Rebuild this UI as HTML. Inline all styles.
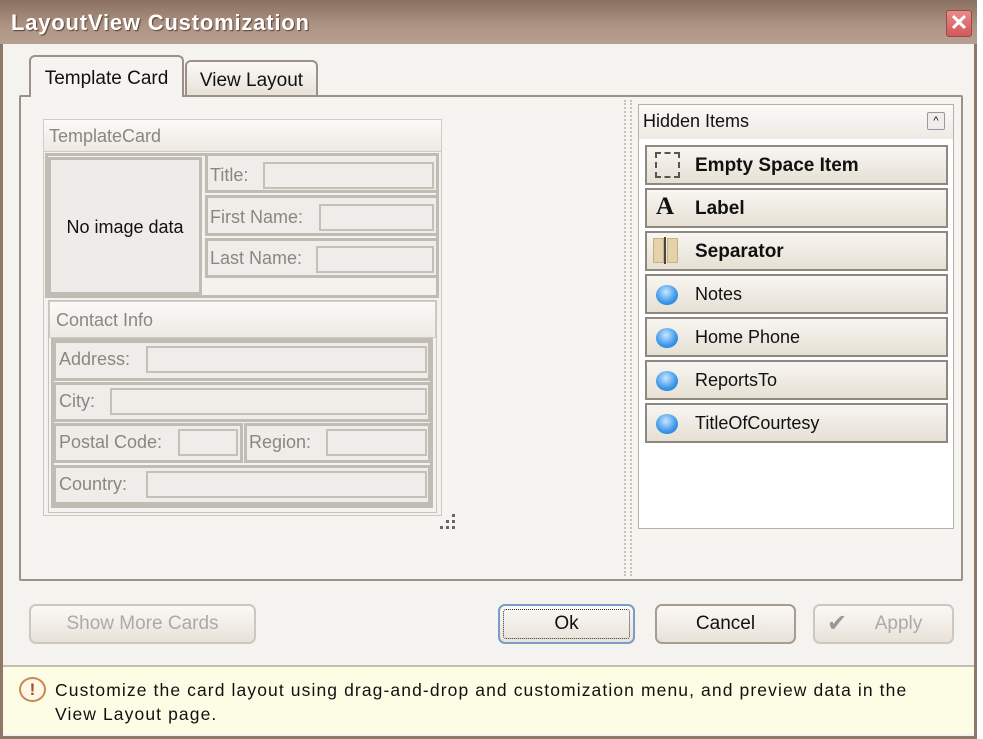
<!DOCTYPE html>
<html><head><style>
*{box-sizing:border-box;margin:0;padding:0}
body{width:983px;height:739px;background:#fff;position:relative;overflow:hidden;font-family:"Liberation Sans",sans-serif;font-size:18px;color:#111}
.a{position:absolute}
.win{left:0;top:0;width:977px;height:739px;background:#f5f3ef;border:3px solid #8e7868;border-top:0}
.title{left:0;top:0;width:977px;height:44px;background:linear-gradient(#8a7060,#ad9484 60%,#b8a090);color:#fff;font-weight:bold;font-size:22px;letter-spacing:0.8px;padding:10px 0 0 11px;text-shadow:1px 1px 1px #5a4030}
.close{left:946px;top:10px;width:26px;height:27px;background:linear-gradient(#ea8a8a,#d25858);border:1px solid #9a4a4a;border-radius:3px;color:#fff;font-weight:bold;font-size:22px;line-height:24px;text-align:center}
.panel{left:19px;top:95px;width:944px;height:486px;border:2px solid #9c9088;background:#f6f4f0;border-radius:2px}
.tab{border:2px solid #9c9088;border-bottom:0;border-radius:6px 6px 0 0;text-align:center}
.g{color:#8a8680}
.box{border:3px solid #c0bcb4;background:#efedea}
.inp{border:2px solid #c4c0b8;background:#efedea}
.hdr{background:linear-gradient(#fbfaf8,#edeae4);border:1px solid #d0ccc4}
.item{left:645px;width:303px;height:40px;border:2px solid #8f8880;background:linear-gradient(#f8f6f2,#e6e0d4);padding:8px 0 0 48px}
.ball{left:9px;top:9px;width:22px;height:20px;border-radius:50%;background:radial-gradient(circle at 45% 35%,#c8e6ff,#3a96e8 60%,#1a70c8)}
.btn{top:604px;height:40px;border:2px solid #a89c90;border-radius:7px;background:linear-gradient(#fbf9f6,#e8e2d8);text-align:center;line-height:36px;font-size:19px}
</style></head><body>
<div class="a win"></div>
<div class="a title">LayoutView Customization</div>
<div class="a close">✕</div>
<div class="a panel"></div>
<div class="a tab" style="left:29px;top:55px;width:155px;height:42px;background:#f6f4f0;padding-top:11px;font-size:19px">Template Card</div>
<div class="a tab" style="left:185px;top:60px;width:133px;height:35px;background:linear-gradient(#fbfaf7,#e8e2d8);padding-top:8px;font-size:19px">View Layout</div>

<!-- card -->
<div class="a" style="left:43px;top:119px;width:399px;height:397px;border:1px solid #cdc8c0;background:#f4f2ee"></div>
<div class="a hdr g" style="left:43px;top:119px;width:399px;height:33px;padding:6px 0 0 5px">TemplateCard</div>
<div class="a" style="left:45px;top:153px;width:394px;height:145px;border:3px solid #c0bcb4"></div>
<div class="a box" style="left:48px;top:157px;width:154px;height:138px;background:#eeece8"></div>
<div class="a" style="left:53px;top:217px;width:144px;text-align:center">No image data</div>
<div class="a box" style="left:205px;top:153px;width:234px;height:40px"></div><div class="a g" style="left:210px;top:165px">Title:</div><div class="a inp" style="left:263px;top:162px;width:171px;height:27px"></div>
<div class="a box" style="left:205px;top:195px;width:234px;height:41px"></div><div class="a g" style="left:210px;top:207px">First Name:</div><div class="a inp" style="left:319px;top:204px;width:115px;height:27px"></div>
<div class="a box" style="left:205px;top:238px;width:234px;height:40px"></div><div class="a g" style="left:210px;top:248px">Last Name:</div><div class="a inp" style="left:316px;top:246px;width:118px;height:27px"></div>

<div class="a" style="left:48px;top:300px;width:389px;height:213px;border:1px solid #c8c4bc;background:#f4f2ee"></div>
<div class="a hdr g" style="left:49px;top:301px;width:387px;height:37px;padding:8px 0 0 6px">Contact Info</div>
<div class="a" style="left:51px;top:338px;width:382px;height:170px;border:3px solid #c0bcb4"></div>
<div class="a box" style="left:53px;top:340px;width:378px;height:41px"></div><div class="a g" style="left:59px;top:349px">Address:</div><div class="a inp" style="left:146px;top:346px;width:281px;height:27px"></div>
<div class="a box" style="left:53px;top:382px;width:378px;height:40px"></div><div class="a g" style="left:59px;top:391px">City:</div><div class="a inp" style="left:110px;top:388px;width:317px;height:27px"></div>
<div class="a box" style="left:53px;top:423px;width:190px;height:40px"></div><div class="a g" style="left:59px;top:432px">Postal Code:</div><div class="a inp" style="left:178px;top:429px;width:60px;height:27px"></div>
<div class="a box" style="left:244px;top:423px;width:187px;height:40px"></div><div class="a g" style="left:249px;top:432px">Region:</div><div class="a inp" style="left:326px;top:429px;width:101px;height:27px"></div>
<div class="a box" style="left:53px;top:465px;width:378px;height:40px"></div><div class="a g" style="left:59px;top:474px">Country:</div><div class="a inp" style="left:146px;top:471px;width:281px;height:27px"></div>
<div class="a" style="left:452px;top:514px;width:3px;height:3px;background:#666"></div>
<div class="a" style="left:446px;top:520px;width:3px;height:3px;background:#666"></div>
<div class="a" style="left:452px;top:520px;width:3px;height:3px;background:#666"></div>
<div class="a" style="left:440px;top:526px;width:3px;height:3px;background:#666"></div>
<div class="a" style="left:446px;top:526px;width:3px;height:3px;background:#666"></div>
<div class="a" style="left:452px;top:526px;width:3px;height:3px;background:#666"></div>

<!-- splitter -->
<div class="a" style="left:624px;top:100px;width:8px;height:476px;border-left:2px dotted #c8c0b4;border-right:2px dotted #c8c0b4"></div>

<!-- hidden items -->
<div class="a" style="left:638px;top:104px;width:316px;height:425px;background:#fff;border:1px solid #b8b0a6"></div>
<div class="a hdr" style="left:639px;top:105px;width:314px;height:34px;border:0;padding:6px 0 0 4px">Hidden Items</div>
<div class="a" style="left:927px;top:112px;width:18px;height:18px;border:1px solid #999;border-radius:2px;background:#f0eeea;font-size:11px;text-align:center;line-height:16px">^</div>
<div class="a item" style="top:145px;font-weight:bold;font-size:19px"><div class="a" style="left:8px;top:5px;width:25px;height:26px;border:2px dashed #555"></div>Empty Space Item</div>
<div class="a item" style="top:188px;font-weight:bold;font-size:19px"><div class="a" style="left:9px;top:3px;font-family:'Liberation Serif',serif;font-size:25px">A</div>Label</div>
<div class="a item" style="top:231px;font-weight:bold;font-size:19px"><div class="a" style="left:6px;top:5px;width:11px;height:25px;background:#e6d2a8;border:1px solid #c8b080"></div><div class="a" style="left:20px;top:5px;width:11px;height:25px;background:#e6d2a8;border:1px solid #c8b080"></div><div class="a" style="left:17px;top:4px;width:2px;height:27px;background:#444"></div>Separator</div>
<div class="a item" style="top:274px"><div class="a ball"></div>Notes</div>
<div class="a item" style="top:317px"><div class="a ball"></div>Home Phone</div>
<div class="a item" style="top:360px"><div class="a ball"></div>ReportsTo</div>
<div class="a item" style="top:403px"><div class="a ball"></div>TitleOfCourtesy</div>

<!-- buttons -->
<div class="a btn" style="left:29px;width:227px;color:#aaa;border-color:#ccc8c0">Show More Cards</div>
<div class="a btn" style="left:498px;width:137px;border-color:#7a9cc8"><div class="a" style="left:3px;top:3px;right:3px;bottom:3px;border:1px dotted #333;border-radius:3px"></div>Ok</div>
<div class="a btn" style="left:655px;width:141px">Cancel</div>
<div class="a btn" style="left:813px;width:141px;color:#aaa;border-color:#ccc8c0;padding-left:30px">Apply<div class="a" style="left:12px;top:0;color:#999;font-size:24px">✔</div></div>

<!-- footer -->
<div class="a" style="left:3px;top:665px;width:971px;height:69px;background:#fdfde6;border-top:2px solid #c8bcb0"></div>
<div class="a" style="left:19px;top:677px;width:27px;height:25px;border-radius:50%;border:2px solid #c88a50;background:#fff8e8;color:#a05020;font-weight:bold;font-size:17px;text-align:center;line-height:21px">!</div>
<div class="a" style="left:55px;top:678px;font-size:17.5px;line-height:24px;width:920px;white-space:nowrap;letter-spacing:1.1px">Customize the card layout using drag-and-drop and customization menu, and preview data in the<br>View Layout page.</div>
</body></html>
